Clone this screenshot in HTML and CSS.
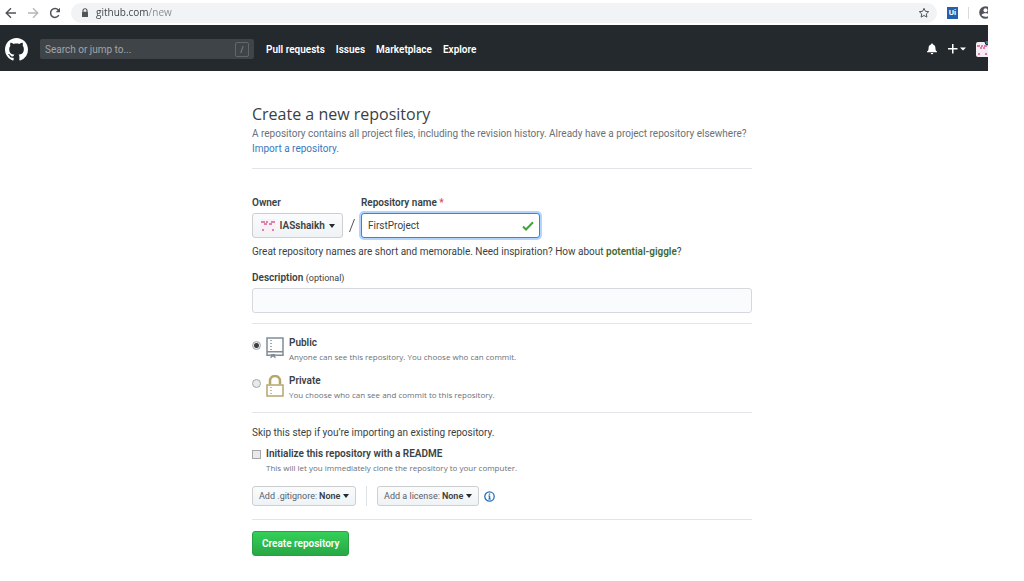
FILE: index.html
```html
<!DOCTYPE html>
<html lang="en">
<head>
  <meta charset="UTF-8">
  <meta name="viewport" content="width=device-width, initial-scale=1.0">
  <title>Create a New Repository</title>
  <link rel="stylesheet" href="styles.css">
</head>
<body>
  <div class="window">
    <!-- Browser toolbar -->
    <div class="toolbar">
      <button class="tool" aria-label="Back"><svg width="12" height="12" viewBox="0 0 12 12" fill="none" stroke="#50545a" stroke-width="1.4"><path d="M11 6H1.5M6 1.2 1.2 6 6 10.8"/></svg></button>
      <button class="tool" aria-label="Forward"><svg width="12" height="12" viewBox="0 0 12 12" fill="none" stroke="#b4b6b9" stroke-width="1.3"><path d="M1 6h9.5M6 1.2 10.8 6 6 10.8"/></svg></button>
      <button class="tool" aria-label="Reload"><svg width="12" height="12" viewBox="0 0 12 12"><path d="M9.8 8.2A4.4 4.4 0 1 1 9.3 3.1" fill="none" stroke="#50545a" stroke-width="1.5"/><path d="M11 .8v4.4H6.6z" fill="#50545a"/></svg></button>
      <div class="address">
        <svg width="8" height="10" viewBox="0 0 8 10"><path d="M2 4V2.7a2 2 0 0 1 4 0V4" fill="none" stroke="#50545a" stroke-width="1.1"/><rect x="1" y="3.8" width="6" height="5.2" rx=".6" fill="#50545a"/></svg>
        <input class="url" type="text" value="github.com/new" aria-label="Address">
        <button class="tool" aria-label="Bookmark"><svg width="12" height="12" viewBox="0 0 12 12" fill="none" stroke="#50545a"><path d="m6 1.300 1.400 3 3.300.4-2.400 2.200.6 3.200L6 8.500l-2.900 1.600.6-3.200L1.300 4.700l3.300-.4z"/></svg></button>
      </div>
      <button class="extension" aria-label="Extension">Ui</button>
      <span class="toolbar-divider"></span>
      <button class="tool profile" aria-label="Profile"><svg width="13" height="13" viewBox="0 0 13 13"><circle cx="6.5" cy="6.5" r="6.3" fill="#50545a"/><circle cx="6.5" cy="4.3" r="2" fill="#fff"/><path d="M2.5 9c1.200-2.300 6.800-2.300 8 0-1.500 2.300-6.500 2.300-8 0z" fill="#fff"/></svg></button>
    </div>

    <header class="header">
      <a class="logo" href="#" aria-label="Homepage"><svg width="23" height="23" viewBox="0 0 16 16" fill="#fff"><path d="M8 0C3.580 0 0 3.580 0 8c0 3.540 2.290 6.530 5.470 7.590.4.070.55-.17.55-.38 0-.19-.01-.82-.01-1.490-2.010.37-2.530-.49-2.690-.94-.09-.23-.48-.94-.82-1.130-.28-.15-.68-.52-.01-.53.63-.01 1.080.58 1.230.82.72 1.210 1.870.87 2.330.66.07-.52.28-.87.51-1.070-1.780-.2-3.640-.89-3.640-3.950 0-.87.31-1.590.82-2.150-.08-.2-.36-1.020.08-2.120 0 0 .67-.21 2.200.82.64-.18 1.320-.27 2-.27.68 0 1.360.09 2 .27 1.530-1.040 2.200-.82 2.200-.82.44 1.100.16 1.920.08 2.120.51.56.82 1.270.82 2.150 0 3.070-1.870 3.750-3.650 3.950.29.25.54.73.54 1.480 0 1.070-.01 1.930-.01 2.200 0 .21.15.46.55.38A8.013 8.013 0 0 0 16 8c0-4.420-3.580-8-8-8z"/></svg></a>
      <div class="search">
        <input type="text" placeholder="Search or jump to..." aria-label="Search">
        <kbd>/</kbd>
      </div>
      <nav class="nav">
        <a href="#">Pull requests</a>
        <a href="#">Issues</a>
        <a href="#">Marketplace</a>
        <a href="#">Explore</a>
      </nav>
      <div class="actions">
        <button class="tool" aria-label="Notifications"><svg width="12" height="12" viewBox="0 0 12 12" fill="#fff"><path d="M6 .5c.6 0 1 .4 1 .9 1.600.5 2.400 1.800 2.400 3.300 0 2.300.5 3 1.600 3.800v.8H1v-.8c1.100-.8 1.600-1.500 1.600-3.800 0-1.500.8-2.800 2.400-3.300 0-.5.4-.9 1-.9zM4.700 10h2.600a1.300 1.300 0 0 1-2.600 0z"/></svg></button>
        <button class="tool add" aria-label="Create new"><svg width="18" height="10" viewBox="0 0 18 10" fill="#fff"><path d="M4 0h1.500v4H9.500v1.500h-4v4H4v-4H0V4h4zM12 3.500h6L15 6.500z"/></svg></button>
        <button class="tool avatar" aria-label="Account"><svg width="16" height="16" viewBox="0 0 16 16"><rect y="1" width="16" height="15" rx="2" fill="#f4eef4"/><path d="M1 4h3v2H1zM5 4h2v2H5zM8 4h3v2H8zM4 6h2v2H4zM7 6h2v2H7zM2 12h2v2H2zM9 12h2v2H9z" fill="#e07aad"/><circle cx="12" cy="1" r="3" fill="#2f6fc4" stroke="#24292e"/></svg></button>
      </div>
    </header>

    <main class="content">
      <h1>Create a new repository</h1>
      <p class="lead">A repository contains all project files, including the revision history. Already have a project repository elsewhere?<br><a href="#">Import a repository.</a></p>

      <form>
        <section class="block names">
          <div class="name-row">
            <div class="field">
              <label for="owner">Owner</label>
              <div class="dropdown owner">
                <svg width="14" height="14" viewBox="0 0 14 14"><rect width="14" height="14" fill="#f8f0f5"/><path d="M0 2h4v2H0zM5 2h2v2H5zM10 2h4v2h-4zM3 4h3v2H3zM8 4h3v2H8zM1 10h2v2H1zM11 10h2v2h-2z" fill="#df82b0"/></svg>
                <select id="owner"><option>IASshaikh</option></select>
                <span class="caret"></span>
              </div>
            </div>
            <svg class="slash" width="6" height="25" viewBox="0 0 6 25" stroke="#50555a"><path d="M.5 19 5.500 6"/></svg>
            <div class="field">
              <label for="repo">Repository name <span class="required">*</span></label>
              <div class="repo-name">
                <input type="text" id="repo" value="FirstProject">
                <svg width="12" height="10" viewBox="0 0 12 10" fill="none" stroke="#3fa535" stroke-width="2"><path d="m1 5.500 3 3L11 1.200"/></svg>
              </div>
            </div>
          </div>
          <p>Great repository names are short and memorable. Need inspiration? How about <strong class="suggestion">potential-giggle</strong>?</p>
          <div class="field">
            <label for="description">Description <small>(optional)</small></label>
            <input class="description" type="text" id="description">
          </div>
        </section>

        <section class="block visibility">
          <label class="choice">
            <input type="radio" name="visibility" checked>
            <svg width="18" height="22" viewBox="0 0 18 22" fill="none" stroke="#7f8d98" stroke-width="1.5"><path d="M4.500 18.200H1V1h16v17.200H9.500M1 14.800h16"/><path d="M5 3v10" stroke-dasharray="1 2"/><path d="M4.500 17h5v4.500L7 19.500l-2.500 2z" fill="#7f8d98" stroke="none"/></svg>
            <span><b>Public</b><small>Anyone can see this repository. You choose who can commit.</small></span>
          </label>
          <label class="choice">
            <input type="radio" name="visibility">
            <svg width="18" height="22" viewBox="0 0 18 22" fill="none" stroke="#b5a76b" stroke-width="1.5"><path d="M4 9.500V6a5 5 0 0 1 10 0v3.500" stroke-width="2.5"/><path d="M1 10h16v11H1z"/><path d="M5 12v8" stroke-dasharray="1 2"/></svg>
            <span><b>Private</b><small>You choose who can see and commit to this repository.</small></span>
          </label>
        </section>

        <section class="block setup">
          <p>Skip this step if you’re importing an existing repository.</p>
          <label class="choice readme">
            <input type="checkbox">
            <span><b>Initialize this repository with a README</b><small>This will let you immediately clone the repository to your computer.</small></span>
          </label>
          <div class="options">
            <div class="dropdown small">
              <label for="gitignore">Add .gitignore:</label>
              <select id="gitignore"><option>None</option></select>
              <span class="caret"></span>
            </div>
            <span class="options-divider"></span>
            <div class="dropdown small">
              <label for="license">Add a license:</label>
              <select id="license"><option>None</option></select>
              <span class="caret"></span>
            </div>
            <a class="info" href="#" aria-label="About licenses"><svg width="11" height="11" viewBox="0 0 11 11"><circle cx="5.5" cy="5.5" r="4.7" fill="none" stroke="#2a6fb5" stroke-width="1.3"/><path d="M4.800 2.500h1.400v1.300H4.800zM4.300 4.600h1.900v3h.7v.9H4.200v-.9h.7V5.500h-.6z" fill="#2a6fb5"/></svg></a>
          </div>
        </section>

        <div class="block submit-row">
          <button class="submit" type="button">Create repository</button>
        </div>
      </form>
    </main>
  </div>
</body>
</html>
```
FILE: styles.css
```css
* {
  box-sizing: border-box;
}
body {
  margin: 0;
  background: #fff;
  color: #3a3f44;
  font-family: Roboto, "Open Sans", sans-serif;
  font-size: 10px;
  line-height: 15px;
}
h1, p {
  margin: 0;
}
input, button, select {
  font: inherit;
  color: inherit;
  margin: 0;
}
svg {
  display: block;
  flex: none;
}
a {
  color: #3a78bd;
  text-decoration: none;
}
b, strong {
  font-weight: 600;
}
.window {
  margin-right: 36px;
  overflow: hidden;
}
.tool {
  flex: none;
  padding: 0;
  border: none;
  background: none;
}

/* browser toolbar */
.toolbar {
  display: flex;
  align-items: center;
  gap: 10px;
  height: 25px;
  padding-left: 5px;
}
.address {
  flex: 1;
  display: flex;
  align-items: center;
  gap: 7px;
  height: 20px;
  padding: 0 7px 0 10px;
  border-radius: 10px;
  background: #f1f3f4;
}
.url {
  flex: 1;
  min-width: 0;
  padding: 0;
  border: none;
  background: linear-gradient(90deg, #3c4043 53px, #85898d 53px) text;
  font-family: "Open Sans", sans-serif;
  -webkit-text-fill-color: transparent;
}
.extension {
  width: 11px;
  height: 12px;
  padding: 0;
  border: none;
  background: #2460ae;
  color: #fff;
  font-size: 8px;
  font-weight: 700;
  line-height: 12px;
}
.toolbar-divider {
  width: 1px;
  height: 12px;
  background: #d8dadd;
}
.profile, .avatar {
  margin-right: -4px;
}

/* site header */
.header {
  display: flex;
  align-items: center;
  height: 46px;
  padding: 2px 0 0 5px;
  background: #24292e;
}
.search {
  display: flex;
  align-items: center;
  width: 214px;
  height: 20px;
  margin: 0 12px;
  padding: 0 5px;
  border-radius: 2px;
  background: #3f4448;
}
.search input {
  flex: 1;
  min-width: 0;
  padding: 0;
  border: none;
  background: none;
}
.search input::placeholder {
  color: #a2a5a8;
}
.search kbd {
  width: 14px;
  height: 15px;
  border: 1px solid #62676c;
  border-radius: 2px;
  color: #8d9195;
  font: 9px/13px "Open Sans", sans-serif;
  text-align: center;
}
.nav {
  display: flex;
  gap: 11px;
}
.nav a {
  color: #fff;
  font-weight: 600;
}
.actions {
  display: flex;
  align-items: center;
  gap: 10px;
  margin-left: auto;
}

/* form */
.content {
  max-width: 548px;
  margin: 0 auto;
  padding: 31px 16px 24px 32px;
}
h1 {
  font-family: "Open Sans", sans-serif;
  font-size: 16px;
  font-weight: 400;
  line-height: 24px;
}
.lead {
  padding-bottom: 12px;
  color: #6a7178;
}
.block {
  border-top: 1px solid #e1e4e8;
}
.names {
  padding: 26px 0 10px;
}
.name-row {
  display: flex;
  align-items: flex-end;
  gap: 6px;
  margin-bottom: 6px;
}
.field > label {
  display: block;
  height: 15px;
  margin-bottom: 3px;
  font-weight: 600;
}
.field small {
  font-size: 9px;
  font-weight: 400;
}
.required {
  color: #d7505c;
}
.dropdown {
  display: flex;
  align-items: center;
  justify-content: center;
  gap: 3px;
  height: 25px;
  border: 1px solid #cdcfd1;
  border-radius: 3px;
  background: linear-gradient(#fafbfc, #eff3f6);
}
.dropdown select {
  appearance: none;
  padding: 0;
  border: none;
  background: none;
  font-weight: 600;
}
.owner {
  width: 91px;
}
.owner svg {
  margin-right: 2px;
}
.caret {
  border: 3px solid transparent;
  border-top: 4px solid #24292e;
  border-bottom: none;
}
.repo-name {
  position: relative;
}
.repo-name input {
  display: block;
  width: 179px;
  height: 25px;
  padding: 0 24px 0 6px;
  border: 1px solid #2188ff;
  border-radius: 3px;
  box-shadow: 0 0 0 2px #b3d4fb;
}
.repo-name svg {
  position: absolute;
  top: 8px;
  right: 6px;
}
.suggestion {
  color: #3f6b35;
}
.names > p {
  margin-bottom: 11px;
}
.description {
  display: block;
  width: 100%;
  height: 25px;
  padding: 0 6px;
  border: 1px solid #d5d8dc;
  border-radius: 3px;
  background: #fafbfc;
}
.visibility {
  display: grid;
  gap: 10px;
  padding: 12px 0 10px;
}
.choice {
  display: flex;
  gap: 5px;
}
.choice svg {
  margin-top: 1px;
}
.choice b, .choice small {
  display: block;
  line-height: 14px;
}
.choice small {
  color: #6a7178;
  font-family: "Open Sans", sans-serif;
  font-size: 8px;
}
.choice input {
  flex: none;
  appearance: none;
  width: 9px;
  height: 9px;
  margin-top: 5px;
  border: 1px solid #a5a7a9;
  background: #e8e9ea;
}
.choice input[type="radio"] {
  border-radius: 50%;
}
.choice input[type="radio"]:checked {
  background: radial-gradient(circle, #3a3f44 2px, #e8e9ea 3px);
}
.setup {
  padding: 12px 0 13px;
}
.readme {
  margin-top: 7px;
}
.readme input {
  margin-top: 3px;
}
.options {
  display: flex;
  align-items: center;
  margin-top: 11px;
}
.small {
  gap: 2px;
  height: 20px;
  padding: 0 6px;
  font-size: 9px;
}
.small label {
  color: #586069;
}
.options-divider {
  width: 1px;
  height: 20px;
  margin: 0 10px;
  background: #dfe2e5;
}
.info {
  margin-left: 5px;
}
.submit-row {
  padding-top: 11px;
}
.submit {
  height: 25px;
  padding: 0 9px;
  border: 1px solid #28a043;
  border-radius: 3px;
  background: linear-gradient(#34d058, #28a745);
  color: #fff;
  font-weight: 600;
}
```
